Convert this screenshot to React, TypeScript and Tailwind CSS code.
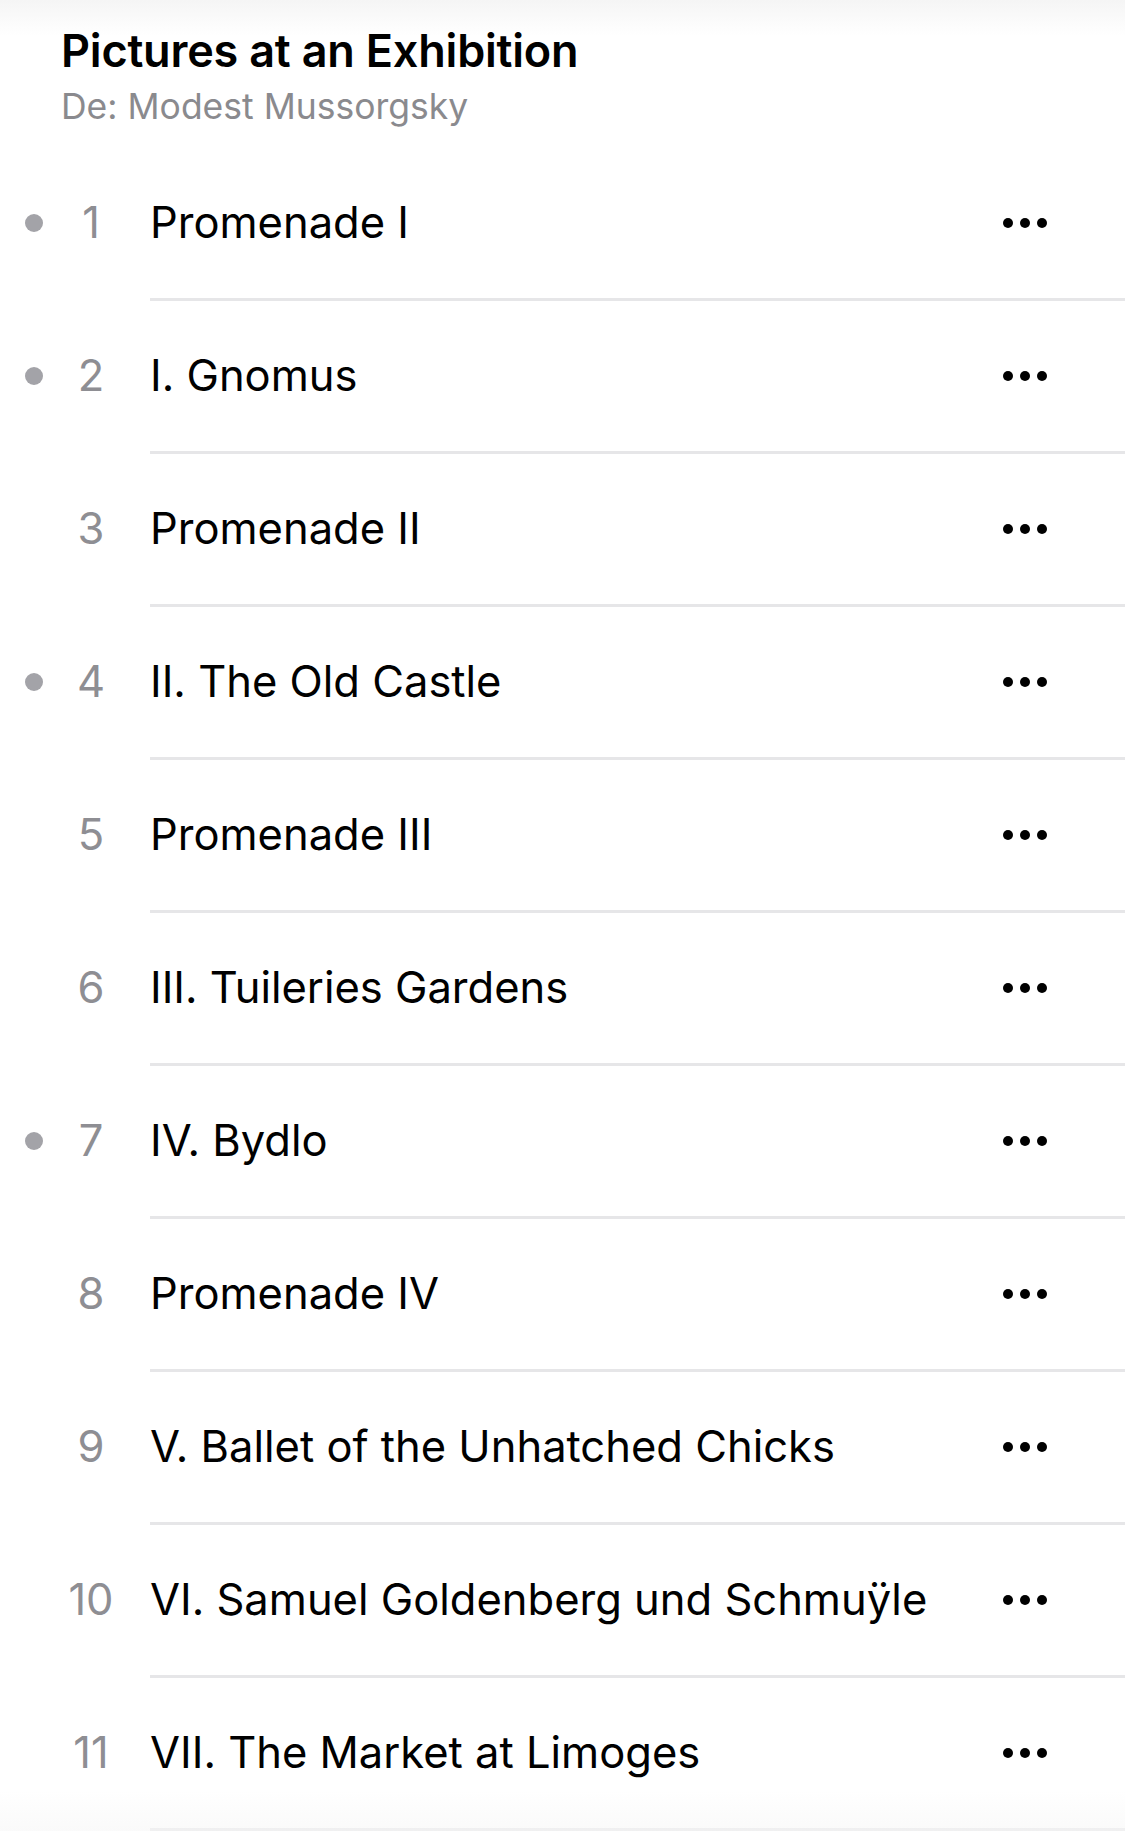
const tracks = [
  { n: 1, title: "Promenade I", dot: true },
  { n: 2, title: "I. Gnomus", dot: true },
  { n: 3, title: "Promenade II", dot: false },
  { n: 4, title: "II. The Old Castle", dot: true },
  { n: 5, title: "Promenade III", dot: false },
  { n: 6, title: "III. Tuileries Gardens", dot: false },
  { n: 7, title: "IV. Bydlo", dot: true },
  { n: 8, title: "Promenade IV", dot: false },
  { n: 9, title: "V. Ballet of the Unhatched Chicks", dot: false },
  { n: 10, title: "VI. Samuel Goldenberg und Schmuÿle", dot: false },
  { n: 11, title: "VII. The Market at Limoges", dot: false },
];

function MoreDots() {
  return (
    <div className="flex items-center gap-[7px]">
      <span className="w-[10px] h-[10px] rounded-full bg-black" />
      <span className="w-[10px] h-[10px] rounded-full bg-black" />
      <span className="w-[10px] h-[10px] rounded-full bg-black" />
    </div>
  );
}

export default function App() {
  return (
    <div
      className="w-[1125px] h-[1831px] overflow-hidden bg-white relative"
      style={{ fontFamily: "Inter, 'Noto Sans', sans-serif" }}
    >
      {/* Header */}
      <div className="h-[148px] pl-[61px] pt-[20px] bg-[linear-gradient(to_bottom,#f5f5f5_0px,#ffffff_36px)]">
        <h1 className="text-[45px] leading-[62px] font-semibold text-black tracking-[-0.2px]">
          Pictures at an Exhibition
        </h1>
        <p className="text-[35.5px] leading-[50px] text-[#8a8a8e]">
          De: Modest Mussorgsky
        </p>
      </div>

      {/* Track list */}
      <div className="flex flex-col">
        {tracks.map((t) => (
          <div key={t.n} className="flex h-[153px]">
            <div className="w-[150px] pb-[3px] flex items-center">
              <div className="w-[60px] flex justify-center pl-[8px]">
                {t.dot && (
                  <span className="w-[18px] h-[18px] rounded-full bg-[#a3a3a8]" />
                )}
              </div>
              <span className="w-[62px] text-center text-[43.5px] text-[#8e8e93]">
                {t.n}
              </span>
            </div>
            <div className="flex-1 flex items-center justify-between border-b-[3px] border-[#e6e6e8] pr-[78px]">
              <span className="text-[43.5px] text-black">{t.title}</span>
              <MoreDots />
            </div>
          </div>
        ))}
      </div>

      {/* bottom fade */}
      <div className="absolute left-0 right-0 bottom-0 h-[40px] bg-gradient-to-b from-white/0 to-[#f7f7f7]/60 pointer-events-none" />
    </div>
  );
}
